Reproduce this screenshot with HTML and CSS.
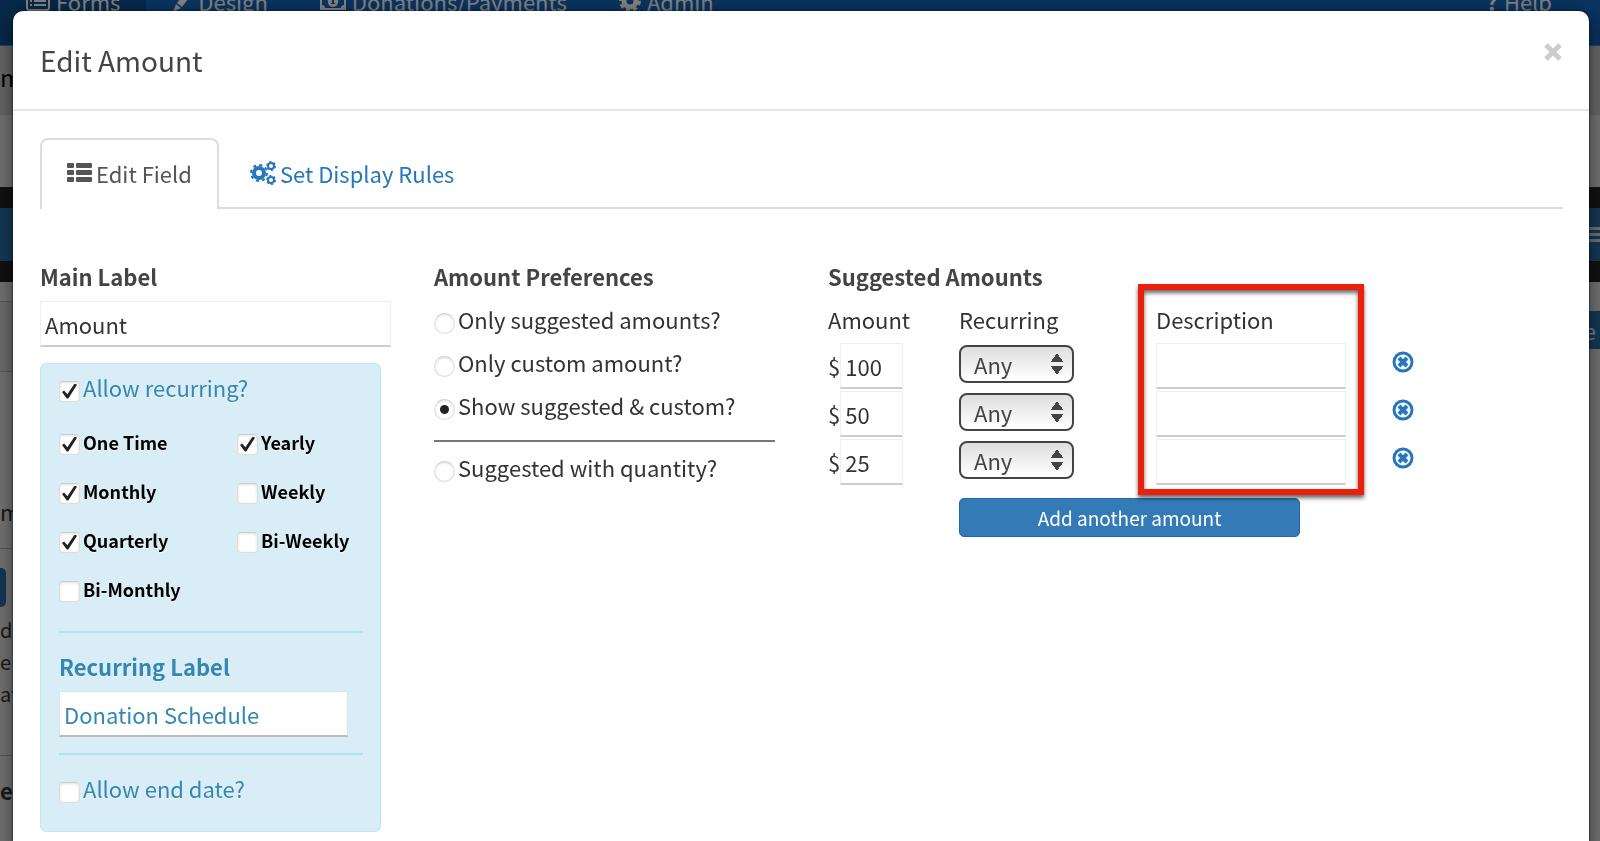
FILE: index.html
```
<!DOCTYPE html>
<html lang="en">
<head>
    <meta charset="UTF-8">
    <meta name="viewport" content="width=device-width, initial-scale=1.0">
    <title>Edit Amount</title>
    <link rel="stylesheet" href="styles.css">
</head>
<body>
    <div class="page">
        <nav class="navbar">
            <a href="#" class="nav-forms active">
                <svg width="24" height="20" viewBox="0 0 24 20"><rect x="1" y="1" width="22" height="18" rx="2" fill="none" stroke="currentColor" stroke-width="2"/><path d="M4 6h2M8 6h12M4 10h2M8 10h12M4 14h2M8 14h12" stroke="currentColor" stroke-width="2"/></svg>
                Forms
            </a>
            <a href="#" class="nav-design">
                <svg width="20" height="22" viewBox="0 0 20 22"><path d="M14 1l5 4-9 12-5-4zM4 14l5 4-8 4z" fill="currentColor"/></svg>
                Design
            </a>
            <a href="#" class="nav-donations">
                <svg width="26" height="20" viewBox="0 0 26 20"><path fill-rule="evenodd" d="M0 1h26v18H0zM5 3a3 3 0 0 1-3 3v8a3 3 0 0 1 3 3h16a3 3 0 0 1 3-3V6a3 3 0 0 1-3-3z" fill="currentColor"/><path fill-rule="evenodd" d="M13 4c7 0 7 12 0 12S6 4 13 4zm-2 3v2h1v3h-1v1h4v-1h-1V6h-1z" fill="currentColor"/></svg>
                Donations/Payments
            </a>
            <a href="#" class="nav-admin">
                <svg width="22" height="22" viewBox="0 0 22 22"><circle cx="11" cy="11" r="6" fill="none" stroke="currentColor" stroke-width="5"/><circle cx="11" cy="11" r="9" fill="none" stroke="currentColor" stroke-width="4" stroke-dasharray="4 3"/></svg>
                Admin
            </a>
            <a href="#" class="nav-help"><b>?</b> Help</a>
        </nav>
        <div class="page-title">m</div>
        <div class="page-gap"></div>
        <div class="toolbar">
            <span class="toolbar-btn"></span>
            <span class="toolbar-btn menu-btn"><i></i><i></i><i></i></span>
        </div>
        <div class="page-body">
            <div class="side">
                <div class="side-head"></div>
                <div class="side-tab"></div>
                <div class="side-item">m</div>
                <div class="side-btn"></div>
                <p>d l<br>e<br>at</p>
                <div class="side-foot">er</div>
            </div>
            <button class="save-btn" type="button">e</button>
        </div>
    </div>

    <div class="backdrop"></div>

    <div class="modal">
        <div class="modal-header">
            <h1>Edit Amount</h1>
            <button type="button" class="close" aria-label="Close">
                <svg width="18" height="18" viewBox="0 0 18 18"><path d="M2 2l14 14M16 2L2 16" stroke="currentColor" stroke-width="5"/></svg>
            </button>
        </div>

        <div class="modal-body">
            <ul class="tabs">
                <li>
                    <a href="#" class="active">
                        <svg width="25" height="20" viewBox="0 0 25 20" fill="currentColor"><rect width="7" height="5" rx="1"/><rect x="9" width="16" height="5" rx="1"/><rect y="7" width="7" height="5" rx="1"/><rect x="9" y="7" width="16" height="5" rx="1"/><rect y="14" width="7" height="5" rx="1"/><rect x="9" y="14" width="16" height="5" rx="1"/></svg>
                        Edit Field
                    </a>
                </li>
                <li>
                    <a href="#">
                        <svg width="26" height="24" viewBox="0 0 26 24" fill="none" stroke="currentColor">
                            <circle cx="9" cy="12" r="5" stroke-width="4"/>
                            <circle cx="9" cy="12" r="8" stroke-width="2" stroke-dasharray="3.2 3.08"/>
                            <circle cx="21" cy="5" r="3" stroke-width="2"/>
                            <circle cx="21" cy="5" r="4" stroke-width="2" stroke-dasharray="2 2.19"/>
                            <circle cx="21" cy="19" r="3" stroke-width="2"/>
                            <circle cx="21" cy="19" r="4" stroke-width="2" stroke-dasharray="2 2.19"/>
                        </svg>
                        Set Display Rules
                    </a>
                </li>
            </ul>

            <form class="columns">
                <div class="col">
                    <label class="title" for="mainLabel">Main Label</label>
                    <input type="text" id="mainLabel" class="text-input" value="Amount">

                    <div class="well">
                        <label class="check"><input type="checkbox" checked>Allow recurring?</label>
                        <div class="schedule">
                            <label class="check"><input type="checkbox" checked>One Time</label>
                            <label class="check"><input type="checkbox" checked>Yearly</label>
                            <label class="check"><input type="checkbox" checked>Monthly</label>
                            <label class="check"><input type="checkbox">Weekly</label>
                            <label class="check"><input type="checkbox" checked>Quarterly</label>
                            <label class="check"><input type="checkbox">Bi-Weekly</label>
                            <label class="check"><input type="checkbox">Bi-Monthly</label>
                        </div>
                        <hr>
                        <label class="title" for="recurringLabel">Recurring Label</label>
                        <input type="text" id="recurringLabel" class="text-input" value="Donation Schedule">
                        <hr>
                        <label class="check"><input type="checkbox">Allow end date?</label>
                    </div>
                </div>

                <div class="col">
                    <h2 class="title">Amount Preferences</h2>
                    <div class="prefs">
                        <label class="check"><input type="radio" name="pref">Only suggested amounts?</label>
                        <label class="check"><input type="radio" name="pref">Only custom amount?</label>
                        <label class="check"><input type="radio" name="pref" checked>Show suggested &amp; custom?</label>
                        <hr>
                        <label class="check"><input type="radio" name="pref">Suggested with quantity?</label>
                    </div>
                </div>

                <div class="col">
                    <h2 class="title">Suggested Amounts</h2>
                    <table class="amounts">
                        <thead>
                            <tr>
                                <th class="c-amount">Amount</th>
                                <th class="c-recurring">Recurring</th>
                                <th class="c-desc">Description<span class="highlight"></span></th>
                                <th></th>
                            </tr>
                        </thead>
                        <tbody>
                            <tr>
                                <td><label class="money">$<input type="text" class="text-input" value="100"></label></td>
                                <td><select aria-label="Recurring"><option>Any</option></select></td>
                                <td><input type="text" class="text-input desc" aria-label="Description"></td>
                                <td><button type="button" class="remove" aria-label="Remove"><svg width="22" height="22" viewBox="0 0 22 22" fill="none" stroke="currentColor"><circle cx="11" cy="11" r="9" stroke-width="3"/><path d="M7 7l8 8M15 7l-8 8" stroke-width="4"/></svg></button></td>
                            </tr>
                            <tr>
                                <td><label class="money">$<input type="text" class="text-input" value="50"></label></td>
                                <td><select aria-label="Recurring"><option>Any</option></select></td>
                                <td><input type="text" class="text-input desc" aria-label="Description"></td>
                                <td><button type="button" class="remove" aria-label="Remove"><svg width="22" height="22" viewBox="0 0 22 22" fill="none" stroke="currentColor"><circle cx="11" cy="11" r="9" stroke-width="3"/><path d="M7 7l8 8M15 7l-8 8" stroke-width="4"/></svg></button></td>
                            </tr>
                            <tr>
                                <td><label class="money">$<input type="text" class="text-input" value="25"></label></td>
                                <td><select aria-label="Recurring"><option>Any</option></select></td>
                                <td><input type="text" class="text-input desc" aria-label="Description"></td>
                                <td><button type="button" class="remove" aria-label="Remove"><svg width="22" height="22" viewBox="0 0 22 22" fill="none" stroke="currentColor"><circle cx="11" cy="11" r="9" stroke-width="3"/><path d="M7 7l8 8M15 7l-8 8" stroke-width="4"/></svg></button></td>
                            </tr>
                        </tbody>
                    </table>
                    <button type="button" class="add-btn">Add another amount</button>
                </div>
            </form>
        </div>
    </div>
</body>
</html>
```
FILE: styles.css
```
* {
    box-sizing: border-box;
}

body {
    margin: 0;
    height: 100vh;
    overflow: hidden;
    font-family: "Noto Sans CJK SC", "Noto Sans", sans-serif;
    font-size: 22px;
    line-height: 32px;
    color: #333;
    background-color: #fff;
}

input, select, button {
    font: inherit;
    color: inherit;
    margin: 0;
}

svg {
    display: block;
    flex: none;
}

/* Page behind the modal */
.page {
    position: absolute;
    inset: 0;
    overflow: hidden;
    background-color: #dcdcdc;
}

.navbar {
    display: flex;
    height: 90px;
    margin-top: -44px;
    background: linear-gradient(#1670cf, #135fae);
    border-bottom: 1px solid #2a8be8;
}

.navbar a {
    display: flex;
    align-items: center;
    gap: 6px;
    padding: 0 26px;
    color: #fff;
    text-decoration: none;
}

.navbar a.active {
    background-color: #0e5091;
}

.navbar .nav-help {
    margin-left: auto;
    padding-right: 48px;
}

.page-title {
    height: 69px;
    padding-top: 15px;
    font-size: 24px;
    color: #000;
    background-color: #c4c4c4;
}

.page-gap {
    height: 72px;
}

.toolbar {
    display: flex;
    justify-content: space-between;
    align-items: center;
    height: 95px;
    background-color: #222;
}

.toolbar-btn {
    width: 60px;
    height: 53px;
    background-color: #286ca4;
}

.menu-btn {
    display: flex;
    flex-direction: column;
    align-items: flex-end;
    justify-content: center;
    gap: 3px;
}

.menu-btn i {
    width: 12px;
    height: 3px;
    background-color: #ddd;
}

.page-body {
    display: flex;
    justify-content: space-between;
    align-items: flex-start;
}

.side {
    width: 40px;
}

.side-head {
    height: 20px;
    border-bottom: 1px solid #aaa;
}

.side-tab {
    height: 70px;
    background-color: #d0d0d0;
    border-bottom: 1px solid #aaa;
}

.side-item {
    height: 177px;
    padding-top: 123px;
    border-bottom: 1px solid #aaa;
}

.side-btn {
    width: 6px;
    height: 39px;
    margin-top: 19px;
    background-color: #286ca4;
    border-radius: 0 5px 5px 0;
}

.side p {
    margin: 7px 0 0;
    font-size: 20px;
}

.side-foot {
    margin-top: 45px;
    padding-top: 18px;
    border-top: 1px solid #aaa;
    font-weight: bold;
}

.save-btn {
    width: 50px;
    height: 38px;
    margin-top: 29px;
    padding: 0 4px;
    border: none;
    background-color: #286ca4;
    color: #fff;
    line-height: 36px;
    text-align: right;
}

.backdrop {
    position: fixed;
    inset: 0;
    background-color: rgba(0,0,0,0.5);
}

/* Modal */
.modal {
    position: absolute;
    top: 11px;
    left: 13px;
    right: 11px;
    min-height: 100%;
    background-color: #fff;
    border-radius: 10px;
    box-shadow: 0 4px 16px rgba(0,0,0,0.5), 0 0 2px #000033;
}

.modal-header {
    display: flex;
    justify-content: space-between;
    align-items: flex-start;
    height: 100px;
    padding: 27px 27px 0;
    border-bottom: 2px solid #e5e5e5;
}

.modal-header h1 {
    margin: 0;
    font-size: 28px;
    font-weight: normal;
    line-height: 44px;
    color: #444;
}

.close {
    margin-top: 5px;
    padding: 0;
    border: none;
    background: none;
    color: #ccc;
    cursor: pointer;
}

.modal-body {
    padding-top: 27px;
}

.tabs {
    display: flex;
    margin: 0 26px 0 27px;
    padding: 0;
    list-style: none;
    border-bottom: 2px solid #ddd;
}

.tabs a {
    display: flex;
    align-items: center;
    gap: 4px;
    height: 71px;
    margin-bottom: -2px;
    padding: 0 25px 3px;
    border: 2px solid transparent;
    border-bottom: none;
    color: #2676bb;
    text-decoration: none;
}

.tabs a.active {
    margin-right: 4px;
    background-color: #fff;
    border-color: #ddd;
    border-radius: 8px 8px 0 0;
    color: #555;
}

.columns {
    display: grid;
    grid-template-columns: 1fr 1fr 2fr;
    padding-top: 51px;
}

.col {
    padding: 0 26px 0 27px;
}

.title {
    display: block;
    margin: 0;
    font-size: 22px;
    font-weight: bold;
    line-height: 32px;
    color: #444;
}

.text-input {
    display: block;
    width: 100%;
    height: 46px;
    padding: 0 4px;
    border: 1px solid #eee;
    border-bottom: 2px solid #ccc;
    background-color: #fff;
}

.col > .text-input {
    width: calc(100% + 10px);
    margin-top: 9px;
}

/* Tick boxes and radio buttons */
.check {
    display: flex;
    align-items: center;
    gap: 3px;
}

.check input {
    appearance: none;
    display: grid;
    place-items: center;
    width: 21px;
    height: 21px;
    margin-top: 8px;
    flex: none;
    border: 1px solid #ddd;
    border-top-color: #ccc;
    border-radius: 4px;
    background-color: #fff;
    box-shadow: inset 0 1px 3px rgba(0,0,0,0.12);
}

.check input[type="checkbox"]:checked::before {
    content: "";
    width: 15px;
    height: 15px;
    background-color: #222;
    clip-path: polygon(0 56%, 14% 46%, 36% 72%, 84% 0, 100% 8%, 42% 100%, 32% 100%);
}

.check input[type="radio"] {
    border-radius: 50%;
}

.check input[type="radio"]:checked::before {
    content: "";
    width: 9px;
    height: 9px;
    border-radius: 50%;
    background-color: #222;
}

.well {
    margin-top: 16px;
    padding: 7px 17px 27px 18px;
    border: 1px solid #bce8f1;
    border-radius: 6px;
    background-color: #d9edf7;
    color: #3387b0;
    text-shadow: 0 1px 0 rgba(255,255,255,0.5);
}

.well .title {
    color: #3387b0;
}

.well hr {
    margin: 26px 0 17px;
    border: none;
    border-top: 2px solid #b0e2ed;
}

.well .text-input {
    width: 95%;
    margin-top: 9px;
    border-color: #d5e5ee;
    border-bottom-color: #bbb;
}

.well .text-input + hr {
    margin-top: 16px;
}

.schedule {
    display: grid;
    grid-template-columns: 178px 1fr;
    row-gap: 17px;
    margin-top: 23px;
    font-size: 18px;
    font-weight: bold;
    color: #000;
}

.schedule .check input {
    margin-top: 4px;
}

.prefs {
    display: grid;
    gap: 11px;
    margin-top: 11px;
}

.prefs hr {
    width: 100%;
    margin: 8px 0 -2px;
    border: none;
    border-top: 2px solid #777;
}

/* Suggested amounts */
.amounts {
    width: 100%;
    margin-top: 9px;
    border-collapse: collapse;
    table-layout: fixed;
}

.amounts th, .amounts td {
    padding: 0;
    text-align: left;
    font-weight: normal;
    vertical-align: top;
}

.amounts th {
    height: 42px;
    padding-top: 2px;
}

.amounts td {
    height: 48px;
}

.c-amount {
    width: 131px;
}

.c-recurring {
    width: 197px;
}

.c-desc {
    position: relative;
    width: 236px;
}

.money {
    display: flex;
    align-items: center;
}

.money .text-input {
    width: 63px;
}

.desc {
    width: 190px;
}

.amounts select {
    display: block;
    appearance: none;
    width: 115px;
    height: 38px;
    margin-top: 2px;
    padding: 0 13px;
    border: 2px solid #444;
    border-radius: 8px;
    line-height: 32px;
    color: #444;
    background:
        conic-gradient(from 145deg at 50% 0, #444 70deg, transparent 0) 90px 6px / 12px 9px no-repeat,
        conic-gradient(from -35deg at 50% 100%, #444 70deg, transparent 0) 90px 19px / 12px 9px no-repeat,
        linear-gradient(#dedede, #fff);
}

.remove {
    display: block;
    margin-top: 8px;
    padding: 0;
    border: none;
    background: none;
    color: #2676bb;
    cursor: pointer;
}

.highlight {
    position: absolute;
    top: -17px;
    left: -18px;
    width: 226px;
    height: 211px;
    border: 6px solid #eb1f0c;
    box-shadow: 0 3px 4px rgba(0,0,0,0.6), inset 0 3px 4px rgba(0,0,0,0.6);
    pointer-events: none;
}

.add-btn {
    display: block;
    width: 341px;
    height: 39px;
    margin: 11px 0 0 131px;
    border: 1px solid #2468a4;
    border-radius: 5px;
    background-color: #337ab7;
    color: #fff;
    font-size: 19px;
    line-height: 34px;
    cursor: pointer;
}
```
